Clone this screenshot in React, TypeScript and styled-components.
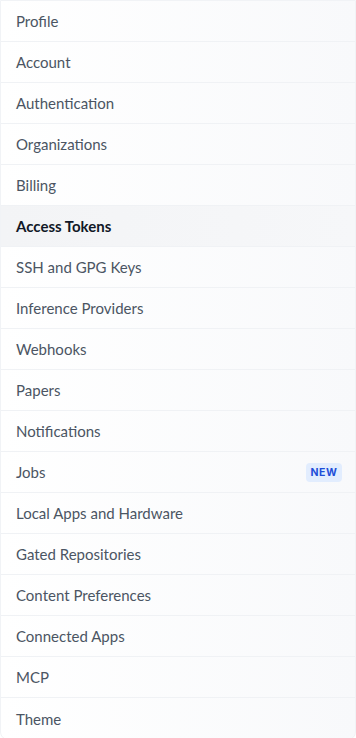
import React from 'react';
import styled, { createGlobalStyle } from 'styled-components';

const GlobalStyle = createGlobalStyle`
  html, body {
    margin: 0;
    padding: 0;
    background: #ffffff;
  }
  * {
    box-sizing: border-box;
  }
`;

interface NavItem {
  label: string;
  active?: boolean;
  isNew?: boolean;
}

const items: NavItem[] = [
  { label: 'Profile' },
  { label: 'Account' },
  { label: 'Authentication' },
  { label: 'Organizations' },
  { label: 'Billing' },
  { label: 'Access Tokens', active: true },
  { label: 'SSH and GPG Keys' },
  { label: 'Inference Providers' },
  { label: 'Webhooks' },
  { label: 'Papers' },
  { label: 'Notifications' },
  { label: 'Jobs', isNew: true },
  { label: 'Local Apps and Hardware' },
  { label: 'Gated Repositories' },
  { label: 'Content Preferences' },
  { label: 'Connected Apps' },
  { label: 'MCP' },
  { label: 'Theme' },
];

const Panel = styled.nav`
  width: 356px;
  border: 1px solid #f1f3f6;
  border-radius: 0 0 8px 8px;
  background: linear-gradient(to right, #ffffff, #f8f9fb);
  overflow: hidden;
`;

const List = styled.ul`
  list-style: none;
  margin: 0;
  padding: 0;
`;

const Row = styled.li<{ $active?: boolean }>`
  display: flex;
  align-items: center;
  justify-content: space-between;
  height: 41px;
  padding: 0 13px 0 15px;
  border-bottom: 1px solid #f0f2f5;
  background: ${(p) => (p.$active ? 'linear-gradient(to right, #f3f4f6, #f6f7f9)' : 'transparent')};
  font-family: Lato, 'Noto Sans', sans-serif;
  font-size: 15px;
  font-weight: ${(p) => (p.$active ? 700 : 400)};
  color: ${(p) => (p.$active ? '#111827' : '#4b5563')};
  cursor: pointer;

  &:last-child {
    border-bottom: none;
  }
`;

const Badge = styled.span`
  display: inline-flex;
  align-items: center;
  justify-content: center;
  width: 36px;
  height: 19px;
  border-radius: 4px;
  background: #e2edfe;
  color: #1d4ed8;
  font-family: Inter, 'Noto Sans', sans-serif;
  font-size: 10.5px;
  font-weight: 700;
  letter-spacing: 0.05em;
`;

export default function App() {
  return (
    <>
      <GlobalStyle />
      <Panel>
        <List>
          {items.map((item) => (
            <Row key={item.label} $active={item.active}>
              <span>{item.label}</span>
              {item.isNew && <Badge>NEW</Badge>}
            </Row>
          ))}
        </List>
      </Panel>
    </>
  );
}
